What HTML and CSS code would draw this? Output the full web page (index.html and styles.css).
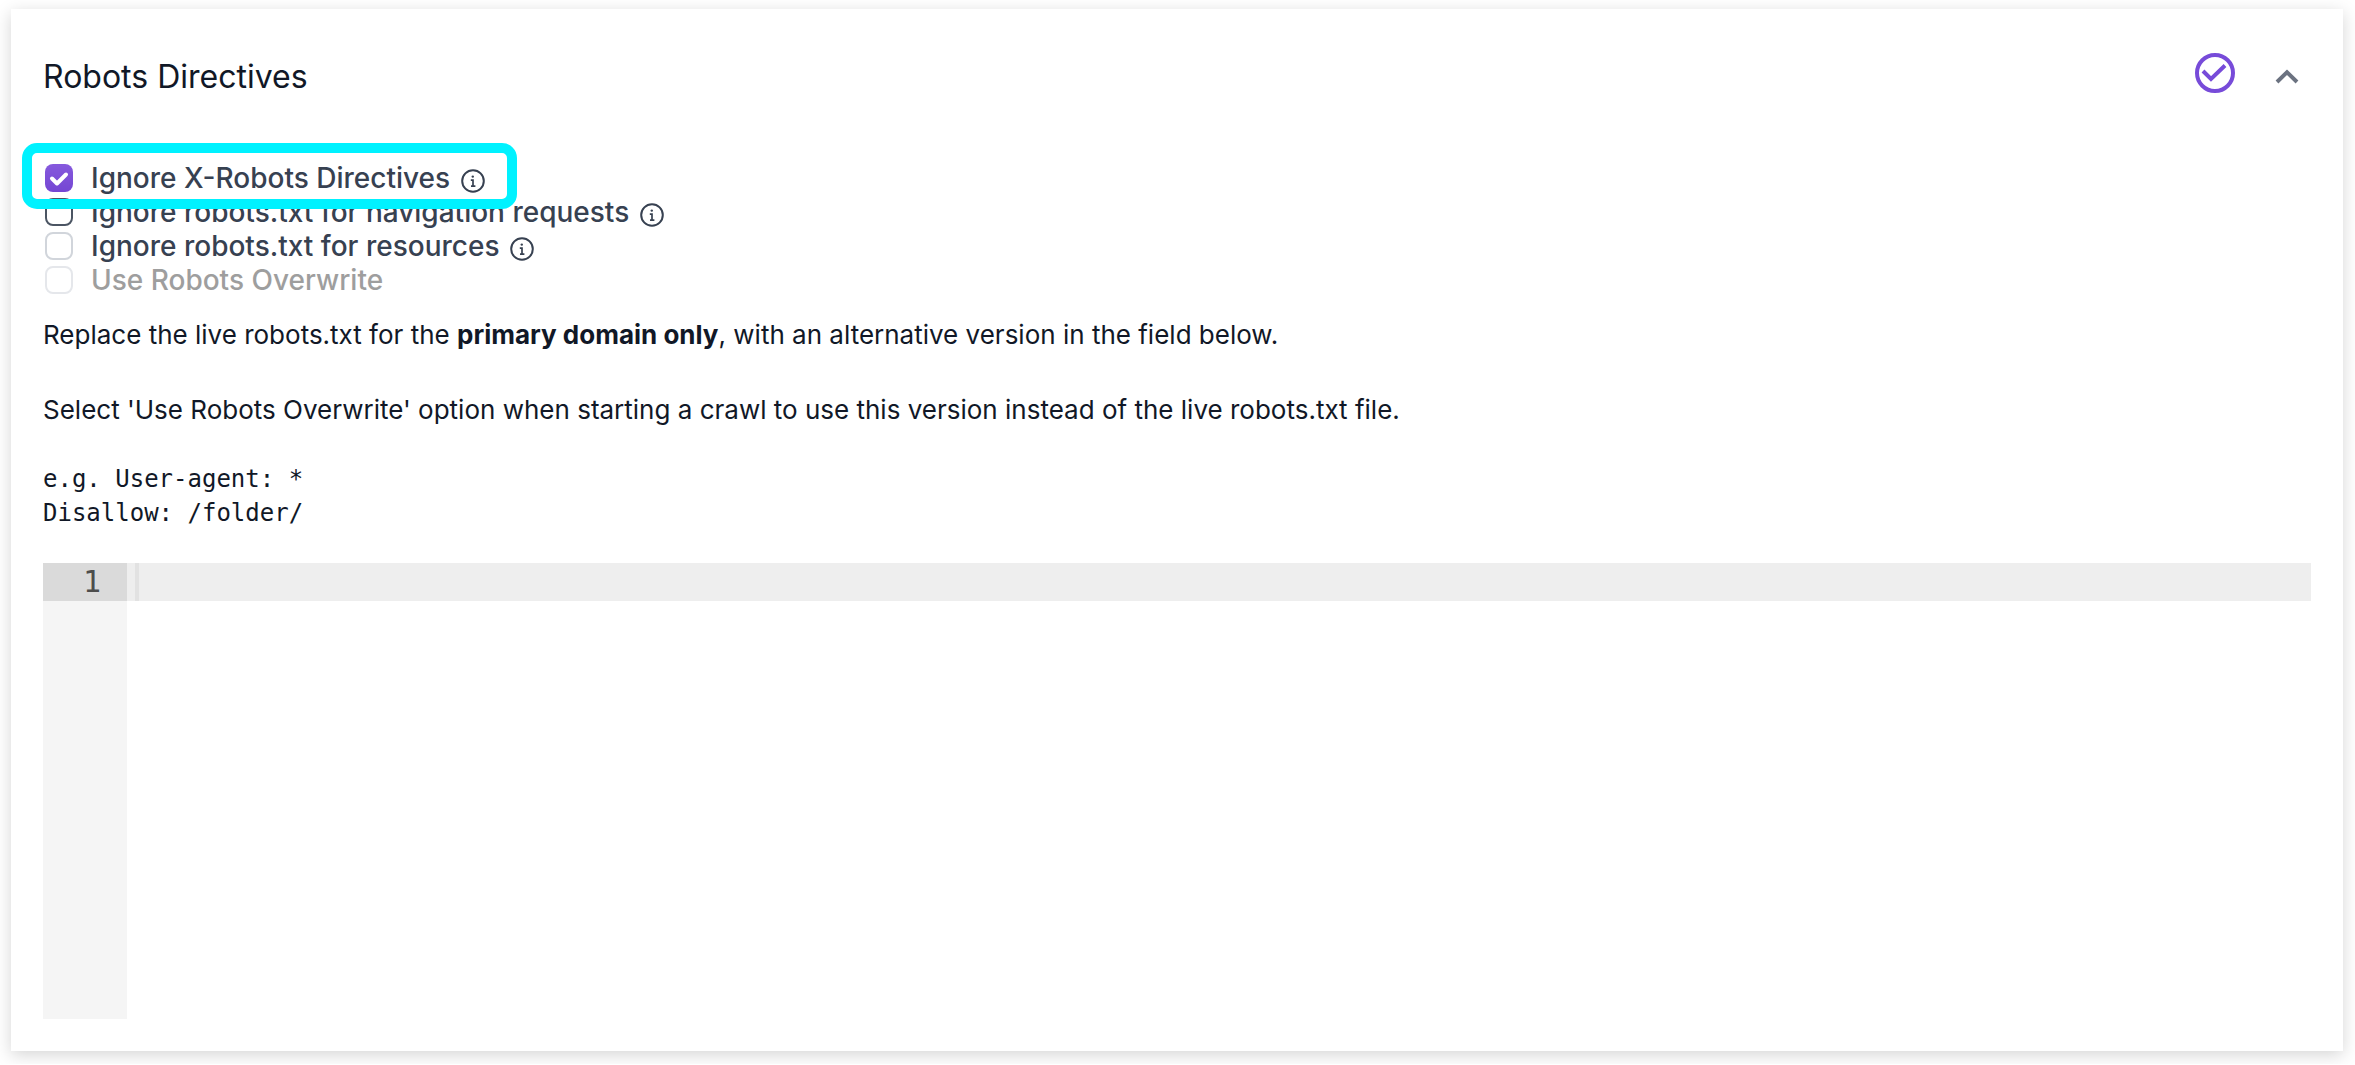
FILE: index.html
```html
<!DOCTYPE html>
<html lang="en">

<head>
    <meta charset="UTF-8">
    <meta name="viewport" content="width=device-width, initial-scale=1.0">
    <title>Robots Directives</title>
    <link rel="stylesheet" href="styles.css">
</head>

<body>
    <svg class="sprite" aria-hidden="true">
        <symbol id="info" viewBox="0 0 24 24">
            <circle cx="12" cy="12" r="10.8" fill="none" stroke="currentColor" stroke-width="2" />
            <circle cx="11.8" cy="7.6" r="1.2" fill="currentColor" />
            <path d="M9.8 11.2H12V17.2M10 17.2H14.4" fill="none" stroke="currentColor" stroke-width="1.7" />
        </symbol>
    </svg>

    <section class="card">
        <header class="card-header">
            <h2>Robots Directives</h2>
            <div class="card-actions">
                <svg class="status-icon" viewBox="0 0 40 40" role="img" aria-label="Complete">
                    <circle cx="20" cy="20" r="18" fill="none" stroke="currentColor" stroke-width="4" />
                    <path d="M8 18L16 26L30 12.5" fill="none" stroke="currentColor" stroke-width="4" />
                </svg>
                <button type="button" class="collapse-button" aria-label="Collapse">
                    <svg viewBox="0 0 24 16">
                        <path d="M2 13L12 3.2L22 13" fill="none" stroke="currentColor" stroke-width="4" />
                    </svg>
                </button>
            </div>
        </header>

        <div class="options">
            <div class="option">
                <input type="checkbox" id="ignore-x-robots" checked>
                <label for="ignore-x-robots">Ignore X-Robots Directives</label>
                <svg class="info-icon"><use href="#info" /></svg>
                <span class="highlight"></span>
            </div>
            <div class="option">
                <input type="checkbox" id="ignore-navigation" class="hovered">
                <label for="ignore-navigation">Ignore robots.txt for navigation requests</label>
                <svg class="info-icon"><use href="#info" /></svg>
            </div>
            <div class="option">
                <input type="checkbox" id="ignore-resources">
                <label for="ignore-resources">Ignore robots.txt for resources</label>
                <svg class="info-icon"><use href="#info" /></svg>
            </div>
            <div class="option">
                <input type="checkbox" id="use-overwrite" disabled>
                <label for="use-overwrite">Use Robots Overwrite</label>
            </div>
        </div>

        <div class="description">
            <p>Replace the live robots.txt for the <strong>primary domain only</strong>, with an alternative version in the field below.</p>
            <p>Select 'Use Robots Overwrite' option when starting a crawl to use this version instead of the live robots.txt file.</p>
        </div>

        <pre class="sample">e.g. User-agent: *
Disallow: /folder/</pre>

        <div class="editor">
            <div class="gutter">
                <div class="line-number">1</div>
            </div>
            <div class="code">
                <textarea aria-label="Robots overwrite" spellcheck="false"></textarea>
                <span class="cursor"></span>
            </div>
        </div>
    </section>
</body>

</html>
```
FILE: styles.css
```css
* {
    margin: 0;
    padding: 0;
    box-sizing: border-box;
}

body {
    font-family: Inter, "Liberation Sans", sans-serif;
    background: white;
    color: #111827;
    padding: 9px 12px 13px 11px;
}

.sprite {
    display: none;
}

.card {
    background: white;
    padding: 32px;
    box-shadow: 0 4px 16px rgba(0, 0, 0, 0.17);
}

.card-header {
    display: flex;
    align-items: center;
    justify-content: space-between;
    height: 72px;
}

h2 {
    font-size: 32px;
    line-height: 40px;
    font-weight: 400;
}

.card-actions {
    display: flex;
    align-items: center;
    gap: 40px;
    padding-right: 12px;
}

.status-icon {
    width: 40px;
    height: 40px;
    margin-bottom: 8px;
    color: #774bd9;
}

.collapse-button {
    display: flex;
    border: none;
    background: none;
    color: #6b7280;
    cursor: pointer;
}

.collapse-button svg {
    width: 24px;
    height: 16px;
}

.options {
    margin-top: 48px;
}

.option {
    position: relative;
    display: flex;
    align-items: center;
    height: 34px;
    padding-left: 2px;
    font-size: 28px;
    line-height: 34px;
    font-weight: 500;
    color: #374151;
}

.option input {
    appearance: none;
    width: 28px;
    height: 28px;
    margin-right: 18px;
    border: 2px solid #d1d5db;
    border-radius: 8px;
    background: white;
}

.option input.hovered {
    border-color: #4b5563;
}

.option input:checked {
    border: none;
    background: url("data:image/svg+xml,%3Csvg xmlns='http://www.w3.org/2000/svg' viewBox='0 0 28 28'%3E%3Cpath d='M7 14.5L12 19.5L21 10.5' fill='none' stroke='white' stroke-width='4' stroke-linecap='round' stroke-linejoin='round'/%3E%3C/svg%3E"), linear-gradient(#8659dd, #7446d3);
}

.option input:disabled {
    border-color: #e5e7eb;
}

.option input:disabled + label {
    color: #9e9e9e;
}

.info-icon {
    width: 24px;
    height: 24px;
    margin: 5px 0 0 11px;
}

.highlight {
    position: absolute;
    top: -18px;
    left: -21px;
    width: 495px;
    height: 66px;
    border: 10px solid #00f2ff;
    border-radius: 15px;
    z-index: 1;
    pointer-events: none;
}

.description {
    margin-top: 20px;
    font-size: 26px;
    line-height: 36px;
}

.description p + p {
    margin-top: 39px;
}

.sample {
    margin-top: 34px;
    font-family: "DejaVu Sans Mono", monospace;
    font-size: 24px;
    line-height: 34px;
}

.editor {
    display: flex;
    height: 456px;
    margin-top: 33px;
    font-family: "DejaVu Sans Mono", monospace;
    font-size: 30px;
    line-height: 38px;
}

.gutter {
    width: 84px;
    background: #f5f5f5;
}

.line-number {
    padding-right: 26px;
    background: #dadada;
    color: #4d4d4c;
    text-align: right;
}

.code {
    position: relative;
    flex: 1;
}

.code textarea {
    display: block;
    width: 100%;
    height: 100%;
    padding: 0 8px;
    border: none;
    outline: none;
    resize: none;
    font: inherit;
    /* active line */
    background: linear-gradient(#eeeeee, #eeeeee) no-repeat top / 100% 38px;
}

.cursor {
    position: absolute;
    top: 0;
    left: 8px;
    width: 4px;
    height: 38px;
    background: #e2e2e2;
}
```
